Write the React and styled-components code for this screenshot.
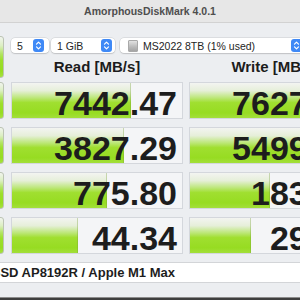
import React from "react";
import styled, { createGlobalStyle } from "styled-components";

const Global = createGlobalStyle`
  html, body { margin: 0; padding: 0; overflow: hidden; background: #3e3e3e; }
  body { font-family: "Liberation Sans", Arial, sans-serif; }
  #root { width: 300px; height: 300px; overflow: hidden; }
`;

const Window = styled.div`
  width: 428px;
  margin-left: -64px;
  background: #eceef1;
  border-bottom: 1px solid #8c8c8c;
  padding-bottom: 14px;
`;

const TitleBar = styled.div`
  height: 22px;
  line-height: 22px;
  background: #e7e7e7;
  border-bottom: 1px solid #d2d2d2;
  text-align: center;
  font-size: 10.5px;
  font-weight: bold;
  color: #4e4e4e;
`;

const Body = styled.div`
  padding: 15px 3px 0 5px;
`;

const Grid = styled.div`
  display: grid;
  grid-template-columns: 64px 172px 172px;
  column-gap: 6px;
  row-gap: ${(p) => p.$rowGap || 0}px;
`;

const GreenButton = styled.div`
  width: 63px;
  box-sizing: border-box;
  border: 1px solid #bcc4b4;
  border-radius: 3px;
  background: linear-gradient(#f1f4ee 0%, #dcefc2 22%, #b2e464 42%, #9ddf2c 58%, #97dc22 85%, #a6e13f 100%);
`;

const AllButton = styled(GreenButton)`
  grid-row: 1 / span 2;
  margin: -2px 0 4px;
`;

const Toolbar = styled.div`
  grid-column: 2 / span 2;
  display: flex;
  gap: 2px;
  height: 15px;
`;

const Select = styled.div`
  display: flex;
  align-items: center;
  box-sizing: border-box;
  height: 15px;
  width: ${(p) => p.$w}px;
  margin-left: ${(p) => p.$ml || 0}px;
  flex: none;
  padding-left: ${(p) => p.$pl || 6}px;
  background: #ffffff;
  border-radius: 4px;
  box-shadow: 0 0 0 0.5px rgba(0, 0, 0, 0.14), 0 1px 1.5px rgba(0, 0, 0, 0.12);
  font-size: 10.5px;
  color: #242424;
`;

const SelectText = styled.span`
  flex: 1;
  white-space: nowrap;
`;

const Stepper = styled.svg`
  flex: none;
  width: 11px;
  height: 13px;
  margin-right: ${(p) => p.$mr}px;
`;

const DiskIcon = styled.span`
  flex: none;
  width: 8px;
  height: 10px;
  margin-right: 5px;
  border: 1px solid #a9a9a9;
  border-radius: 1px;
  background: linear-gradient(#e2e2e2, #b9b9b9 60%, #a4a4a4);
`;

const Header = styled.div`
  grid-column: ${(p) => p.$col};
  height: 29px;
  box-sizing: border-box;
  padding-top: 5px;
  text-align: center;
  font-size: 15px;
  line-height: 18px;
  font-weight: bold;
  color: #1c1c1c;
  white-space: nowrap;
`;

const RowButton = styled(GreenButton)`
  height: 37px;
`;

const Cell = styled.div`
  position: relative;
  height: 37px;
  box-sizing: border-box;
  border: 1px solid #d4d7dc;
  background: #f4f5f7;
  overflow: hidden;
`;

const Bar = styled.div`
  position: absolute;
  left: 0;
  top: 0;
  bottom: 0;
  background: linear-gradient(#f3f4f1 0%, #e6efd9 22%, #bde77a 42%, #a0df30 56%, #97dc22 85%, #a3df3a 100%);
  box-shadow: inset -1px 0 0 rgba(120, 160, 60, 0.35);
`;

const Value = styled.div`
  position: relative;
  padding: 3px 5px 0 0;
  text-align: right;
  font-size: 34px;
  line-height: 35px;
  font-weight: bold;
  color: #1d1d1d;
  white-space: nowrap;
`;

const InfoField = styled.div`
  margin-top: 8px;
  height: 21px;
  box-sizing: border-box;
  border: 1px solid #d3d5d8;
  background: #ffffff;
  padding-left: 10px;
  font-size: 13px;
  line-height: 19px;
  font-weight: bold;
  color: #1d1d1d;
  white-space: nowrap;
`;

const StepperIcon = ({ mr }) => (
  <Stepper $mr={mr} viewBox="0 0 11 13">
    <rect x="0" y="0" width="11" height="13" rx="3" fill="#3f89f6" />
    <path d="M3.5 5.2 L5.5 3.2 L7.5 5.2" stroke="#fff" strokeWidth="1.2" fill="none" strokeLinecap="round" strokeLinejoin="round" />
    <path d="M3.5 7.8 L5.5 9.8 L7.5 7.8" stroke="#fff" strokeWidth="1.2" fill="none" strokeLinecap="round" strokeLinejoin="round" />
  </Stepper>
);

const rows = [
  { id: "seq8", read: 7442.47, write: 7627.42 },
  { id: "seq1", read: 3827.29, write: 5499.21 },
  { id: "rnd64", read: 775.8, write: 183.65 },
  { id: "rnd1", read: 44.34, write: 29.41 },
];

const barWidth = (v) => Math.round(26 + 24 * Math.log10(v));

export default function App() {
  return (
    <>
      <Global />
      <Window>
        <TitleBar>AmorphousDiskMark 4.0.1</TitleBar>
        <Body>
          <Grid>
            <AllButton />
            <Toolbar>
              <Select $w={38}>
                <SelectText>5</SelectText>
                <StepperIcon mr={5} />
              </Select>
              <Select $w={64}>
                <SelectText>1 GiB</SelectText>
                <StepperIcon mr={3} />
              </Select>
              <Select $w={185} $ml={3} $pl={8}>
                <DiskIcon />
                <SelectText>MS2022 8TB (1% used)</SelectText>
                <StepperIcon mr={3} />
              </Select>
            </Toolbar>
            <Header $col={2}>Read [MB/s]</Header>
            <Header $col={3}>Write [MB/s]</Header>
          </Grid>
          <Grid $rowGap={8}>
            {rows.map((r) => (
              <React.Fragment key={r.id}>
                <RowButton />
                <Cell>
                  <Bar style={{ width: barWidth(r.read) }} />
                  <Value>{r.read.toFixed(2)}</Value>
                </Cell>
                <Cell>
                  <Bar style={{ width: barWidth(r.write) }} />
                  <Value>{r.write.toFixed(2)}</Value>
                </Cell>
              </React.Fragment>
            ))}
          </Grid>
          <InfoField>Apple SSD AP8192R / Apple M1 Max</InfoField>
        </Body>
      </Window>
    </>
  );
}
